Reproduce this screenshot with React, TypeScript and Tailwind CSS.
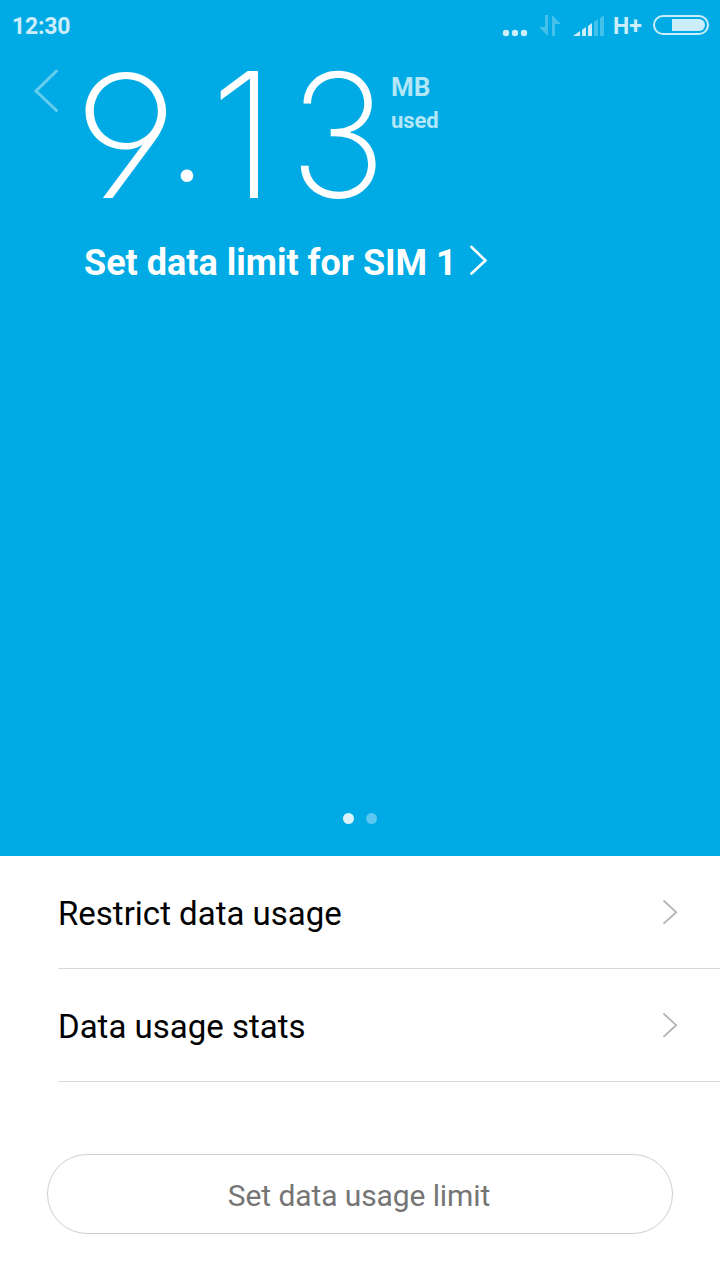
type ChevronProps = {
  className: string;
  viewBox: string;
  d: string;
  width: number;
};

function Chevron({ className, viewBox, d, width }: ChevronProps) {
  return (
    <svg
      className={className}
      viewBox={viewBox}
      fill="none"
      stroke="currentColor"
      strokeWidth={width}
      strokeLinecap="round"
      aria-hidden="true"
    >
      <path d={d} />
    </svg>
  );
}

// Each digit sits in its own cell so the amount keeps the wide display spacing.
const amount = [
  { char: "9", cell: "w-[96px]", glyph: "scale-x-[1.06] scale-y-[0.98] translate-y-[1px]" },
  { char: ".", cell: "w-[26px] text-[159px]", glyph: "-translate-y-[11px]" },
  { char: "1", cell: "w-[86px]", glyph: "" },
  { char: "3", cell: "w-[104px]", glyph: "scale-x-[0.94] scale-y-[0.98]" },
];

const menu = ["Restrict data usage", "Data usage stats"];

function StatusBar() {
  return (
    <div className="flex h-[52px] items-center justify-between pl-3 text-[#cceefa]">
      <span className="pt-[2px] text-[23px] font-bold leading-[52px] tracking-[-0.2px]">12:30</span>
      <div className="flex h-[52px] items-center">
        <svg className="h-[52px] w-[110px]" viewBox="500 0 110 52" fill="currentColor" aria-hidden="true">
          <circle cx="506" cy="33" r="3.2" />
          <circle cx="515" cy="33" r="3.2" />
          <circle cx="524" cy="33" r="3.2" />
          <g opacity="0.33">
            <path d="M545 15h3v21L539 27h6z" />
            <path d="M552 36h3V24h6L552 15z" />
            <path d="M594 36h4V19l-4 3zM600 36h4V15l-4 3z" />
          </g>
          <path d="M573 36h7v-5zM582 36h4V27l-4 3zM588 36h4V23l-4 3z" />
        </svg>
        <span className="w-[43px] pl-[3px] pt-[2px] text-[23px] font-bold">H+</span>
        <svg className="h-[52px] w-[67px]" viewBox="653 0 67 52" fill="none" aria-hidden="true">
          <rect x="654" y="16" width="54" height="18" rx="9" stroke="currentColor" strokeWidth="2" />
          <path d="M672 19h27a6 6 0 0 1 0 12h-27z" fill="currentColor" />
        </svg>
      </div>
    </div>
  );
}

function Summary() {
  return (
    <section className="flex h-[856px] flex-col bg-[#00abe5] text-white">
      <StatusBar />
      <div className="flex h-[160px] items-start">
        <button type="button" aria-label="Back" className="ml-[32px] mt-[16px] text-[#66cdef]">
          <Chevron className="h-[46px] w-[28px]" viewBox="32 68 28 46" d="M56.5 71L36 91l20.5 19.500" width={3} />
        </button>
        <div className="ml-[18px] flex h-[160px] font-['Inter',sans-serif] text-[175px] font-extralight leading-[165px] [font-feature-settings:'cv04']">
          {amount.map((item) => (
            <span key={item.char} className={`flex justify-center ${item.cell}`}>
              <span className={item.glyph}>{item.char}</span>
            </span>
          ))}
        </div>
        <div className="ml-[1px] mt-[18px] font-bold text-[#b3e6f7]">
          <div className="text-[26px] leading-[34px]">MB</div>
          <div className="text-[22px] leading-[33px] tracking-[-0.1px]">used</div>
        </div>
      </div>
      <button type="button" className="ml-[84px] mt-[25px] flex h-[52px] items-center text-4xl font-bold">
        Set data limit for SIM 1
        <Chevron className="ml-[11px] mt-[-6px] h-[34px] w-[22px]" viewBox="468 243 22 34" d="M471.500 247L485.500 260.500l-14 13" width={2.6} />
      </button>
      <div className="mb-8 mt-auto flex justify-center gap-3">
        <span className="h-[11px] w-[11px] rounded-full bg-[#d9f2fb]" />
        <span className="h-[11px] w-[11px] rounded-full bg-[#59c7ee]" />
      </div>
    </section>
  );
}

export default function App() {
  return (
    <main className="h-[1280px] w-[720px] overflow-hidden bg-white font-['Roboto',sans-serif]">
      <Summary />
      <ul className="pl-[58px]">
        {menu.map((label) => (
          <li
            key={label}
            className="flex h-[113px] items-center justify-between border-b border-[#d9d9d9] pr-[41px] text-[33px] text-black"
          >
            <span className="pt-[4px]">{label}</span>
            <Chevron className="h-[28px] w-[18px] text-[#b3b3b3]" viewBox="661 898 18 28" d="M664 901L676.200 912.200l-12.200 11.200" width={1.8} />
          </li>
        ))}
      </ul>
      <button
        type="button"
        className="ml-[47px] mt-[72px] flex h-20 w-[626px] items-center justify-center rounded-full border border-[#cfcfcf] pr-[2px] pt-[3px] text-3xl tracking-[-0.1px] text-[#757575]"
      >
        Set data usage limit
      </button>
    </main>
  );
}
